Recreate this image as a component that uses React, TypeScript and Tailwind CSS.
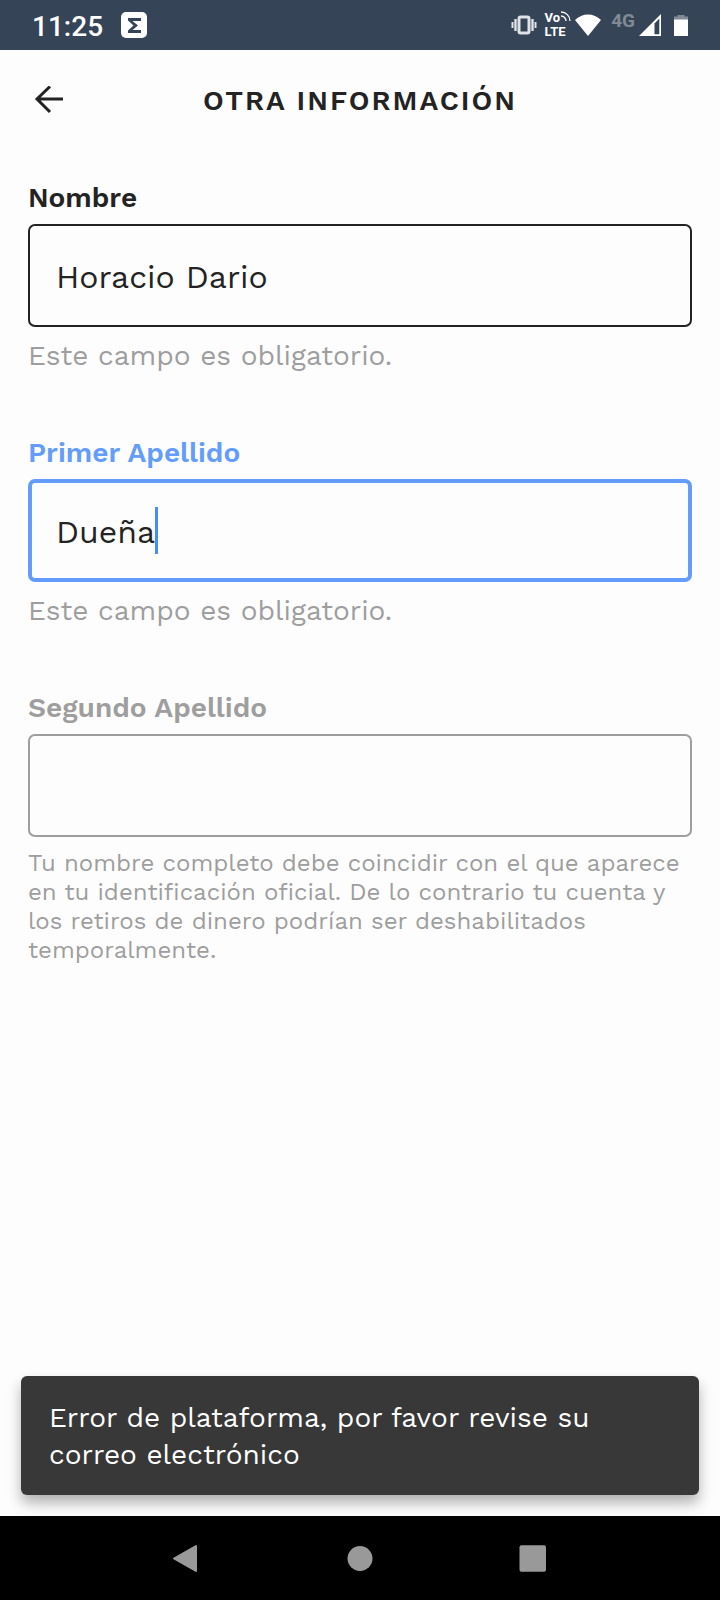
import { useState } from 'react';
import type { ReactNode } from 'react';

type FieldState = 'filled' | 'active' | 'idle';

interface FormFieldProps {
  id: string;
  label: string;
  initialValue: string;
  state: FieldState;
  children: ReactNode;
}

const labelStyles: Record<FieldState, string> = {
  filled: 'text-[#232323]',
  active: 'text-[#639cfb]',
  idle: 'text-[#9e9e9e]',
};

const boxStyles: Record<FieldState, string> = {
  filled: 'border-2 border-[#232323] px-[26px]',
  active: 'border-4 border-[#639cfb] px-6',
  idle: 'border-2 border-[#9e9e9e] px-[26px]',
};

const FormField = ({ id, label, initialValue, state, children }: FormFieldProps) => {
  const [value, setValue] = useState(initialValue);

  return (
    <div>
      <label htmlFor={id} className={`block text-[28px] leading-8 font-semibold ${labelStyles[state]}`}>
        {label}
      </label>
      <div className={`mt-[10px] flex h-[103px] items-center rounded-[7px] ${boxStyles[state]}`}>
        <input
          id={id}
          type="text"
          value={value}
          onChange={(e) => setValue(e.target.value)}
          className={`h-12 min-w-0 bg-transparent pt-[2px] text-[32px] font-normal text-[#232323] outline-none ${
            state === 'active' ? 'field-sizing-content caret-transparent' : 'w-full'
          }`}
        />
        {state === 'active' && <span className="h-[47px] w-[3px] bg-[#4a8cf7]" />}
      </div>
      {children}
    </div>
  );
};

const StatusBar = () => (
  <div className="flex h-[50px] items-center justify-between bg-[#364457] px-8 text-white">
    <div className="flex items-center gap-[18px]">
      <span className="pt-[3px] font-[Roboto] text-[28px] leading-8 font-medium">11:25</span>
      <svg width="26" height="26" viewBox="0 0 26 26">
        <rect width="26" height="26" rx="5" fill="#fff" />
        <path d="M7 6H20V9H11.500L17 13.500L11.500 18H20V21H7V18.500L12.500 13.500L7 8.500Z" fill="#364457" />
      </svg>
    </div>

    <div className="flex items-center">
      {/* vibrate */}
      <svg width="26" height="22" viewBox="0 0 26 22" className="mr-2">
        <rect x="8" y="3" width="10" height="16" rx="1.5" fill="none" stroke="#dfe2e6" strokeWidth="3" />
        <path d="M4.500 5V17M21.500 5V17" stroke="#dfe2e6" strokeWidth="2.4" />
        <path d="M1.500 8V14M24.500 8V14" stroke="#dfe2e6" strokeWidth="2" />
      </svg>
      {/* VoLTE */}
      <div className="mr-1 font-[Roboto] text-[13px] leading-[14px] font-bold">
        <div className="flex items-start">
          Vo
          <svg width="11" height="11" viewBox="0 0 11 11">
            <path d="M1 1A9 9 0 0 1 10 10M1 5A5 5 0 0 1 6 10" fill="none" stroke="#fff" strokeWidth="1.300" />
          </svg>
        </div>
        <div>LTE</div>
      </div>
      {/* wifi */}
      <svg width="26" height="22" viewBox="0 0 26 22" className="mr-[10px]">
        <path d="M0 6C7 -1.500 19 -1.500 26 6L13 22Z" fill="#fff" />
      </svg>
      <span className="mr-1 mb-[9px] font-[Roboto] text-[19px] leading-5 font-bold text-[#818995]">4G</span>
      {/* signal */}
      <svg width="22" height="22" viewBox="0 0 22 22" className="mr-[13px]">
        <path d="M0 22L22 0V22Z" fill="#fff" />
        <path d="M15.500 9.500L20.300 4.500V20.300H15.500Z" fill="#364457" />
      </svg>
      {/* battery */}
      <svg width="14" height="22" viewBox="0 0 14 22">
        <path d="M3.500 1H10.500V2.500H14V6H0V2.500H3.500Z" fill="#818995" />
        <path d="M0 5.500H14V22H0Z" fill="#fff" />
      </svg>
    </div>
  </div>
);

const NavigationBar = () => (
  <nav className="flex h-[84px] items-center justify-center gap-[145px] bg-black">
    <button type="button" aria-label="Atrás">
      <svg width="28" height="28" viewBox="0 0 28 28">
        <path d="M1 14.500L23 2V27Z" fill="#999" stroke="#999" strokeWidth="2" strokeLinejoin="round" />
      </svg>
    </button>
    <button type="button" aria-label="Inicio">
      <svg width="28" height="28" viewBox="0 0 28 28">
        <circle cx="14" cy="14.500" r="12.500" fill="#999" />
      </svg>
    </button>
    <button type="button" aria-label="Recientes">
      <svg width="28" height="28" viewBox="0 0 28 28">
        <rect x="0.500" y="1.300" width="26.500" height="26.500" rx="2" fill="#999" />
      </svg>
    </button>
  </nav>
);

export default function App() {
  return (
    <div className="flex min-h-screen flex-col bg-[#fdfdfd] font-['Work_Sans',Inter,sans-serif]">
      <StatusBar />

      <header className="grid h-[100px] grid-cols-[64px_1fr_64px] items-center">
        <button type="button" aria-label="Volver" className="pl-[34px]">
          <svg width="30" height="28" viewBox="0 0 30 28">
            <path d="M29 13H3M16 0.500L3 13L16 26" fill="none" stroke="#232323" strokeWidth="3" />
          </svg>
        </button>
        <h1 className="pt-[2px] text-center text-[28px] leading-8 font-semibold tracking-[2px] text-[#232323]">
          OTRA INFORMACIÓN
        </h1>
      </header>

      <main className="flex flex-col gap-[62px] px-7 pt-8 pb-8">
        <FormField id="nombre" label="Nombre" initialValue="Horacio Dario" state="filled">
          <p className="mt-[10px] text-[28px] leading-[38px] font-normal text-[#9e9e9e]">
            Este campo es obligatorio.
          </p>
        </FormField>
        <FormField id="primer-apellido" label="Primer Apellido" initialValue="Dueña" state="active">
          <p className="mt-[10px] text-[28px] leading-[38px] font-normal text-[#9e9e9e]">
            Este campo es obligatorio.
          </p>
        </FormField>
        <FormField id="segundo-apellido" label="Segundo Apellido" initialValue="" state="idle">
          <p className="mt-3 text-[24px] leading-[29px] font-normal text-[#9e9e9e]">
            Tu nombre completo debe coincidir con el que aparece en tu identificación oficial. De lo
            contrario tu cuenta y los retiros de dinero podrían ser deshabilitados temporalmente.
          </p>
        </FormField>
      </main>

      <div
        role="alert"
        className="mx-[21px] mt-auto mb-[21px] rounded-[6px] bg-[#383838] px-7 pt-[23px] pb-[22px] text-[28px] leading-[37px] text-white shadow-[0_8px_14px_rgba(0,0,0,0.3)]"
      >
        Error de plataforma, por favor revise su correo electrónico
      </div>

      <NavigationBar />
    </div>
  );
}
